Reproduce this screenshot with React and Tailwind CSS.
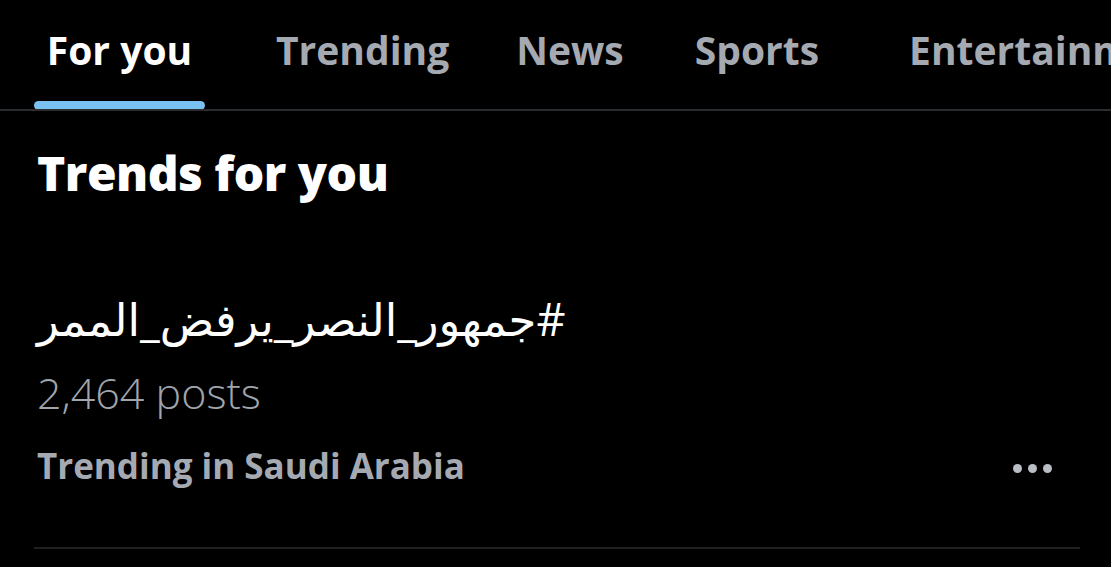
export default function App() {
  const font = { fontFamily: '"Open Sans", "Noto Sans", "DejaVu Sans", sans-serif' };
  return (
    <div className="relative w-[1111px] h-[567px] bg-black overflow-hidden" style={font}>
      <div className="h-[111px] border-b-2 border-[#2a2d30] overflow-hidden">
        <div className="flex items-start pt-[24px] whitespace-nowrap text-[39px] font-bold leading-[52px] text-[#a5aab2]">
          <div className="shrink-0 ml-[34px] w-[171px] flex flex-col items-center text-white">
            <span>For you</span>
            <div className="mt-[25px] h-[9px] w-[171px] rounded-full bg-[#79c1f1]"></div>
          </div>
          <div className="shrink-0 ml-[71px]">Trending</div>
          <div className="shrink-0 ml-[67px]">News</div>
          <div className="shrink-0 ml-[71px]">Sports</div>
          <div className="shrink-0 ml-[90px]">Entertainment</div>
        </div>
      </div>
      <div className="pl-[37px] pt-[32px]">
        <div className="text-[48px] font-extrabold leading-[60px] text-white tracking-[-0.5px]">Trends for you</div>
        <div className="flex flex-col items-start mt-[88px]">
          <div dir="rtl" className="text-[45px] leading-[56px] font-medium text-white">#جمهور_النصر_يرفض_الممر</div>
          <div className="mt-[20px] text-[43px] leading-[52px] font-light text-[#a0a5ac]">2,464 posts</div>
          <div className="mt-[24px] text-[35px] leading-[46px] font-bold text-[#a5aab2]">Trending in Saudi Arabia</div>
        </div>
        <div className="ml-[-3px] mt-[58px] w-[1046px] h-[2px] bg-[#1e2022]"></div>
      </div>
      <div className="absolute left-[1013px] top-[464px] flex gap-[6px]">
        <div className="h-[9px] w-[9px] rounded-full bg-[#b9bdc4]"></div>
        <div className="h-[9px] w-[9px] rounded-full bg-[#b9bdc4]"></div>
        <div className="h-[9px] w-[9px] rounded-full bg-[#b9bdc4]"></div>
      </div>
    </div>
  );
}
